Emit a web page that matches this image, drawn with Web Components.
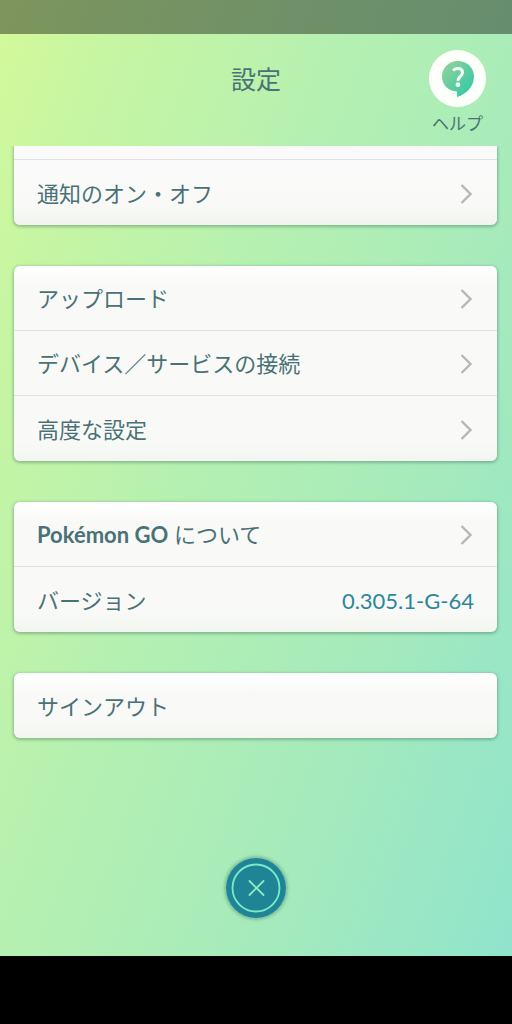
<!DOCTYPE html>
<html lang="ja">
<head>
<meta charset="utf-8">
<meta name="viewport" content="width=device-width, initial-scale=1">
<title>設定</title>
<style>
body {
    margin: 0;
    background: #000;
    color: #4a7276;
    font-family: Lato, "Noto Sans CJK JP", sans-serif;
}
</style>
</head>
<body>
<settings-app></settings-app>

<script>
/**
 * Creates a template element from a string of markup.
 */
const createTemplate = (html) => {
  const template = document.createElement('template')
  template.innerHTML = html
  return template
}

/**
 * Registers a custom element that only renders its template.
 */
const define = (name, html) => {
  const template = createTemplate(html)

  customElements.define(name,
    class extends HTMLElement {
      constructor () {
        super()
        this.attachShadow({ mode: 'open' })
        this.shadowRoot.appendChild(template.content.cloneNode(true))
      }
    })
}

define('status-bar', `
<style>
:host {
    display: block;
    height: 34px;
    background: rgba(0, 0, 0, 0.4);
}
</style>
`)

define('help-button', `
<button type="button">
    <svg width="57" height="57" viewBox="0 0 57 57" aria-hidden="true">
        <defs>
            <linearGradient id="bubble" x1="0" y1="0" x2="1" y2="1">
                <stop offset="0.1" stop-color="#8bd39b"/>
                <stop offset="0.8" stop-color="#3fc9a4"/>
            </linearGradient>
        </defs>
        <circle cx="28.500" cy="28.500" r="28.500" fill="#fdfffa"/>
        <path d="M29 11C38 11 45 17.500 45 26.500C45 36 38 44 28 47V41.500C19 41 13 35 13 26.500C13 17.500 20 11 29 11Z" fill="url(#bubble)"/>
        <path d="M24 20.500C25.400 19.200 27 18.600 28.800 18.600C31.700 18.600 33.500 20.100 33.500 22.600C33.500 26.200 28.900 26.600 28.900 30.800" fill="none" stroke="#f7fff5" stroke-width="3"/>
        <circle cx="28.900" cy="34.700" r="2.400" fill="#f7fff5"/>
    </svg>
    <span><slot></slot></span>
</button>

<style>
:host {
    display: block;
}

button {
    display: flex;
    flex-direction: column;
    align-items: center;
    gap: 5px;
    padding: 0;
    border: none;
    background: none;
    color: inherit;
    font: inherit;
    cursor: pointer;
}

span {
    font-size: 17px;
    line-height: 24px;
}
</style>
`)

define('settings-header', `
<header>
    <h1><slot></slot></h1>
    <slot name="action"></slot>
</header>

<style>
:host {
    display: block;
}

header {
    display: grid;
    grid-template-columns: 1fr auto 1fr;
    align-items: start;
    height: 96px;
    padding: 16px 26px 0;
}

h1 {
    grid-column: 2;
    margin: 0;
    font-size: 25px;
    font-weight: 400;
    line-height: 58px;
}

::slotted([slot="action"]) {
    justify-self: end;
}
</style>
`)

define('settings-card', `
<slot></slot>

<style>
:host {
    display: block;
    overflow: hidden;
    border-radius: 6px;
    background: linear-gradient(#fff, #f9faf8 20px, #f9faf8 calc(100% - 20px), #f2f6ef);
    box-shadow: 0 1px 3px 1px rgba(60, 110, 90, 0.4);
}

/* the upper part has scrolled under the header */
:host([scrolled]) {
    border-radius: 0 0 6px 6px;
    background: linear-gradient(#fafafa, #f9faf8 calc(100% - 20px), #f0f5ec);
}

:host([scrolled])::before {
    content: "";
    display: block;
    height: 13px;
    border-bottom: 1px solid #e0e0e2;
}
</style>
`)

define('settings-link', `
<button type="button">
    <span><slot></slot></span>
    <svg width="12" height="20" viewBox="0 0 12 20" aria-hidden="true">
        <path d="M1.500 1L10.500 10L1.500 19" fill="none" stroke="#b5b8b7" stroke-width="2.400"/>
    </svg>
</button>

<style>
:host {
    display: block;
}

:host(:not(:last-child)) {
    border-bottom: 1px solid #e0e2e1;
}

button {
    display: flex;
    align-items: center;
    justify-content: space-between;
    box-sizing: border-box;
    width: 100%;
    height: 65px;
    padding: 2px 25px 0 23px;
    border: none;
    background: none;
    color: inherit;
    font: inherit;
    font-size: 22px;
    line-height: 32px;
    text-align: left;
    cursor: pointer;
}

:host(:not(:last-child)) button {
    height: 64px;
}

:host([plain]) svg {
    display: none;
}
</style>
`)

define('settings-value', `
<span><slot></slot></span>
<span class="value"><slot name="value"></slot></span>

<style>
:host {
    display: flex;
    align-items: center;
    justify-content: space-between;
    box-sizing: border-box;
    height: 65px;
    padding: 2px 23px 0;
    font-size: 22px;
    line-height: 32px;
}

.value {
    color: #2b8799;
}
</style>
`)

define('close-button', `
<button type="button" aria-label="閉じる">
    <svg width="60" height="60" viewBox="0 0 60 60" aria-hidden="true">
        <circle cx="30" cy="30" r="30" fill="#1f8596"/>
        <circle cx="30" cy="30" r="23.500" fill="none" stroke="#7aebc6" stroke-width="1.800"/>
        <path d="M23.500 23L37.500 37M37.500 23L23.500 37" fill="none" stroke="#8cebc3" stroke-width="1.800" stroke-linecap="round"/>
    </svg>
</button>

<style>
:host {
    display: block;
}

button {
    display: block;
    padding: 0;
    border: none;
    border-radius: 50%;
    background: none;
    box-shadow: 0 0 3px 2px rgba(60, 130, 110, 0.4);
    cursor: pointer;
}

svg {
    display: block;
}
</style>
`)

define('settings-app', `
<div class="screen">
    <status-bar></status-bar>
    <settings-header>設定<help-button slot="action">ヘルプ</help-button></settings-header>
    <main>
        <settings-card scrolled>
            <settings-link>通知のオン・オフ</settings-link>
        </settings-card>
        <settings-card>
            <settings-link>アップロード</settings-link>
            <settings-link>デバイス／サービスの接続</settings-link>
            <settings-link>高度な設定</settings-link>
        </settings-card>
        <settings-card>
            <settings-link><b>Pokémon GO</b> について</settings-link>
            <settings-value>バージョン<span slot="value">0.305.1-G-64</span></settings-value>
        </settings-card>
        <settings-card>
            <settings-link plain>サインアウト</settings-link>
        </settings-card>
    </main>
    <footer>
        <close-button></close-button>
    </footer>
</div>
<div class="navigation"></div>

<style>
:host {
    display: flex;
    flex-direction: column;
    min-height: 100vh;
}

.screen {
    flex: 1;
    display: flex;
    flex-direction: column;
    background: linear-gradient(110deg, #d4fa9a, #c8f6a1 12%, #bcf2ac 32%, #b4f0b1 42%, #a8ebba 66%, #90e4cc);
}

main {
    display: flex;
    flex-direction: column;
    gap: 41px;
    overflow: hidden;
    padding: 0 15px 8px 14px;
}

footer {
    display: flex;
    justify-content: center;
    margin-top: auto;
    padding: 24px 0 38px;
}

.navigation {
    height: 68px;
    background: #000;
}
</style>
`)
</script>
</body>
</html>
